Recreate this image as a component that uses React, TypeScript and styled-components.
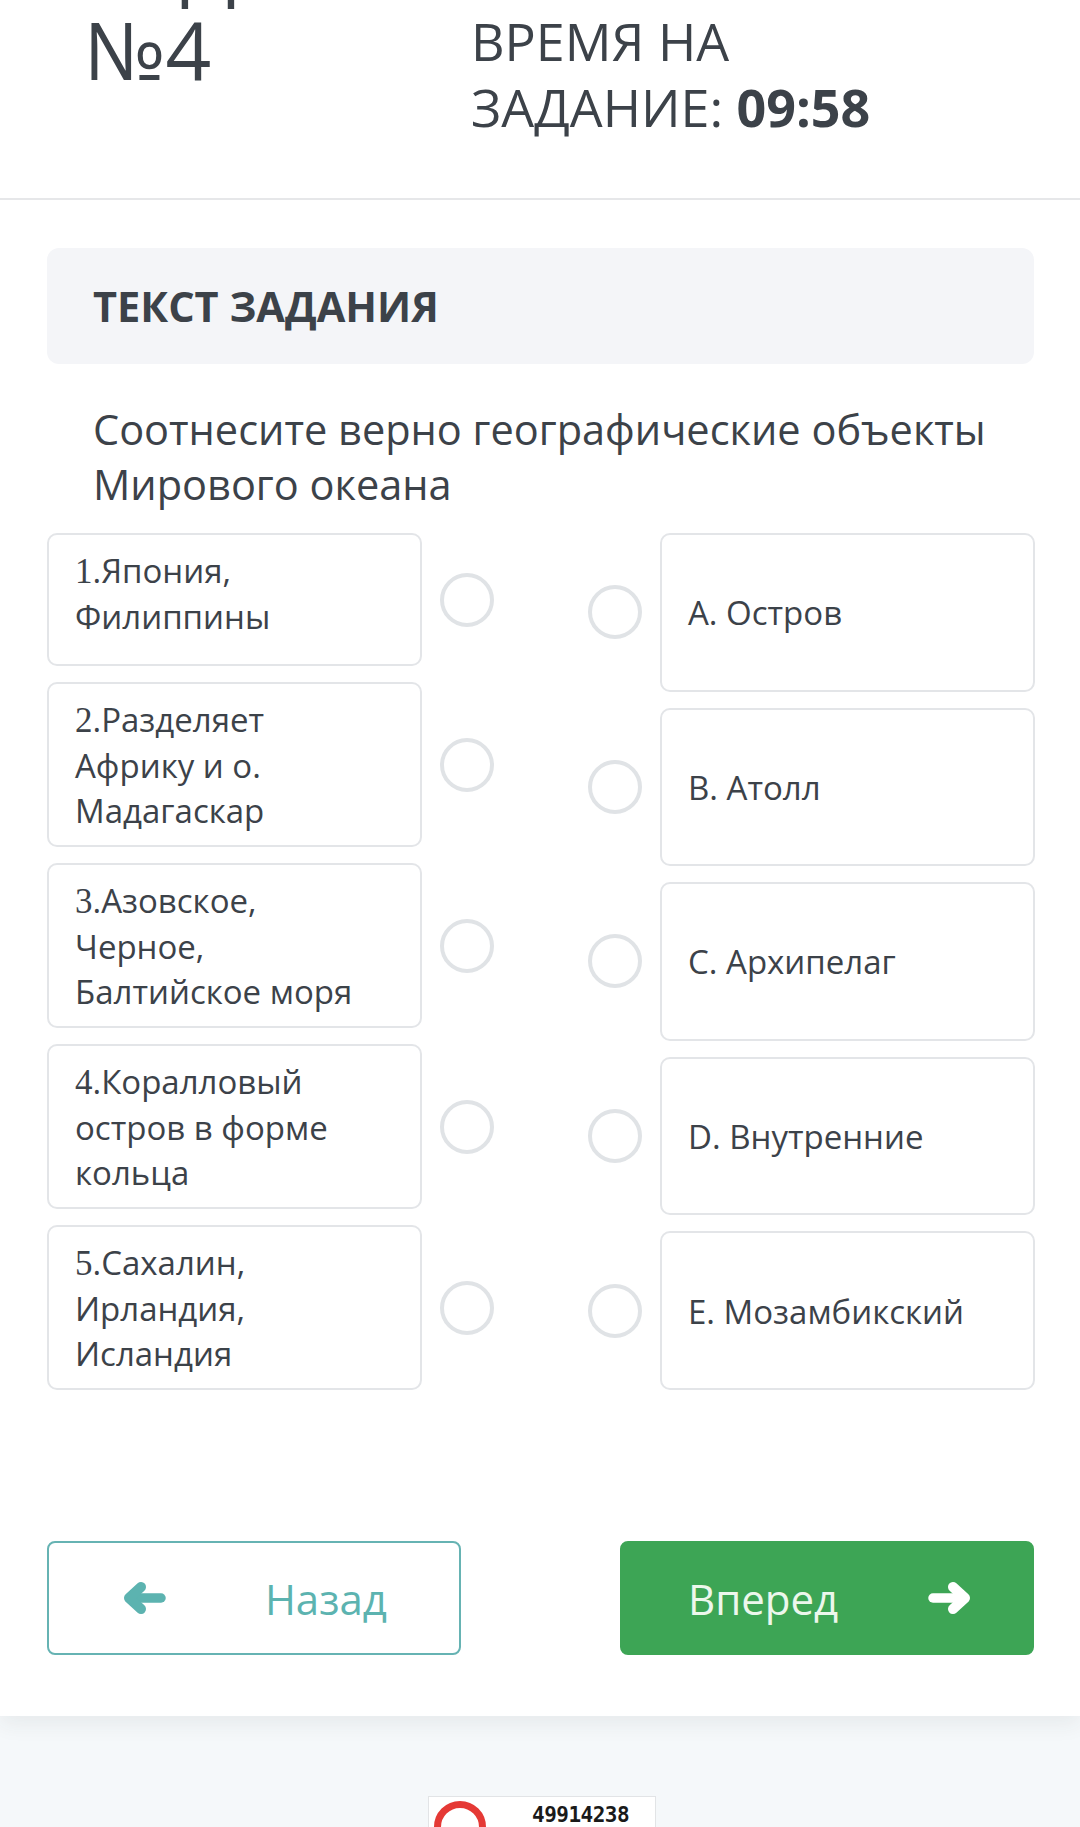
import React from 'react';
import styled, { createGlobalStyle } from 'styled-components';

const GlobalStyle = createGlobalStyle`
    html, body {
        margin: 0;
        padding: 0;
        background: #f5f8fa;
        font-family: "Open Sans", "Noto Sans", sans-serif;
        color: #3c4249;
    }
    * {
        box-sizing: border-box;
    }
`;

const leftItems = [
    { num: '1', lines: ['.Япония,', 'Филиппины'] },
    { num: '2', lines: ['.Разделяет', 'Африку и о.', 'Мадагаскар'] },
    { num: '3', lines: ['.Азовское,', 'Черное,', 'Балтийское моря'] },
    { num: '4', lines: ['.Коралловый', 'остров в форме', 'кольца'] },
    { num: '5', lines: ['.Сахалин,', 'Ирландия,', 'Исландия'] },
];

const rightItems = ['A. Остров', 'B. Атолл', 'C. Архипелаг', 'D. Внутренние', 'E. Мозамбикский'];

const ArrowIcon: React.FC<{ dir: 'left' | 'right' }> = ({ dir }) => (
    <svg
        width="44"
        height="34"
        viewBox="0 0 44 34"
        style={{ transform: dir === 'right' ? 'scaleX(-1)' : undefined }}
    >
        <g fill="none" stroke="currentColor" strokeLinecap="round" strokeLinejoin="round">
            <path d="M12 17 H39" strokeWidth="9.5" />
            <path d="M19 6 L7 17 L19 28" strokeWidth="10" />
        </g>
    </svg>
);

const App: React.FC = () => {
    return (
        <>
            <GlobalStyle />
            <Page>
                <Sheet>
                    <Header>
                        <Title>
                            ЗАДАНИЕ
                            <br />
                            №4
                        </Title>
                        <Timer>
                            ВРЕМЯ НА
                            <br />
                            ЗАДАНИЕ: <b>09:58</b>
                        </Timer>
                    </Header>

                    <Content>
                        <TaskHead>ТЕКСТ ЗАДАНИЯ</TaskHead>
                        <Question>Соотнесите верно географические объекты Мирового океана</Question>

                        <Matching>
                            <Column>
                                {leftItems.map((item) => (
                                    <LeftRow key={item.num}>
                                        <LeftCard>
                                            <Num>{item.num}</Num>
                                            {item.lines.map((line, idx) => (
                                                <React.Fragment key={idx}>
                                                    {idx > 0 && <br />}
                                                    {line}
                                                </React.Fragment>
                                            ))}
                                        </LeftCard>
                                        <Radio />
                                    </LeftRow>
                                ))}
                            </Column>
                            <Column>
                                {rightItems.map((label) => (
                                    <RightRow key={label}>
                                        <Radio />
                                        <RightCard>{label}</RightCard>
                                    </RightRow>
                                ))}
                            </Column>
                        </Matching>

                        <Actions>
                            <NavButton $variant="back">
                                <ArrowIcon dir="left" />
                                <span>Назад</span>
                            </NavButton>
                            <NavButton $variant="next">
                                <span>Вперед</span>
                                <ArrowIcon dir="right" />
                            </NavButton>
                        </Actions>
                    </Content>
                </Sheet>

                <Footer>
                    <Counter>
                        <CounterRing />
                        <CounterValue>49914238</CounterValue>
                    </Counter>
                </Footer>
            </Page>
        </>
    );
};

export default App;

const Page = styled.div`
    margin-top: -100px;
    min-height: 1927px;
`;

const Sheet = styled.div`
    background: #ffffff;
    box-shadow: 0 8px 20px rgba(40, 50, 60, 0.07);
`;

const Header = styled.header`
    display: grid;
    grid-template-columns: 387px 1fr;
    padding: 20px 0 58px 84px;
    border-bottom: 2px solid #e6e7e9;
`;

const Title = styled.h1`
    margin: 0;
    font-size: 80px;
    line-height: 86px;
    font-weight: 400;
    color: #3c4249;
`;

const Timer = styled.div`
    margin-top: 88px;
    font-size: 52px;
    line-height: 66px;
    font-weight: 400;
    color: #3c4249;

    b {
        font-weight: 700;
    }
`;

const Content = styled.main`
    padding: 48px 46px 61px 47px;
`;

const TaskHead = styled.div`
    display: flex;
    align-items: center;
    height: 116px;
    padding: 0 46px;
    border-radius: 12px;
    background: #f4f5f8;
    font-size: 41.5px;
    font-weight: 700;
    color: #3c4249;
`;

const Question = styled.p`
    margin: 38px 0 21px;
    padding: 0 46px;
    font-size: 41.5px;
    line-height: 55px;
    color: #3c4249;
`;

const Matching = styled.div`
    display: grid;
    grid-template-columns: 447px 446px;
    column-gap: 94px;
`;

const Column = styled.div`
    display: flex;
    flex-direction: column;
    gap: 16px;
`;

const LeftRow = styled.div`
    display: flex;
    align-items: center;
    gap: 18px;
`;

const RightRow = styled.div`
    display: flex;
    align-items: center;
    gap: 18px;
    flex: 1;
`;

const Card = styled.div`
    width: 375px;
    flex: none;
    border: 2px solid #e3e5e8;
    border-radius: 10px;
    background: #ffffff;
    padding: 13px 26px 12px;
    font-size: 33px;
    line-height: 45px;
    color: #3c4249;
`;

const LeftCard = styled(Card)`
    min-height: 133px;
`;

const RightCard = styled(Card)`
    display: flex;
    align-items: center;
    align-self: stretch;
`;

const Num = styled.span`
    font-family: "Liberation Serif", "DejaVu Serif", serif;
    font-size: 35px;
`;

const Radio = styled.span`
    flex: none;
    width: 54px;
    height: 54px;
    border: 4px solid #e0e3e6;
    border-radius: 50%;
    background: #ffffff;
`;

const Actions = styled.div`
    display: flex;
    justify-content: space-between;
    margin-top: 151px;
`;

const NavButton = styled.button<{ $variant: 'back' | 'next' }>`
    display: flex;
    align-items: center;
    justify-content: space-between;
    width: 414px;
    height: 114px;
    padding: ${({ $variant }) => ($variant === 'back' ? '0 72px 0 73px' : '0 60px 0 66px')};
    border-radius: 8px;
    font-family: "Open Sans", sans-serif;
    font-size: 42px;
    cursor: pointer;
    border: 2px solid ${({ $variant }) => ($variant === 'back' ? '#66b3b3' : '#3da555')};
    background: ${({ $variant }) => ($variant === 'back' ? '#ffffff' : '#3da555')};
    color: ${({ $variant }) => ($variant === 'back' ? '#5cb3b0' : '#ecf7ec')};

    svg {
        color: ${({ $variant }) => ($variant === 'back' ? '#5cb3b0' : '#ffffff')};
    }
`;

const Footer = styled.footer`
    display: flex;
    justify-content: center;
    padding-top: 80px;
`;

const Counter = styled.div`
    display: flex;
    align-items: flex-start;
    gap: 46px;
    width: 228px;
    height: 62px;
    margin-left: 4px;
    padding: 4px 0 0 5px;
    border: 1px solid #e2e4e6;
    background: #ffffff;
`;

const CounterRing = styled.span`
    width: 52px;
    height: 52px;
    border: 7px solid #e53935;
    border-radius: 50%;
`;

const CounterValue = styled.span`
    margin-top: 2px;
    font-family: "DejaVu Sans Mono", "Liberation Mono", monospace;
    font-weight: 700;
    font-size: 21px;
    letter-spacing: -0.5px;
    color: #1a1a1a;
`;
